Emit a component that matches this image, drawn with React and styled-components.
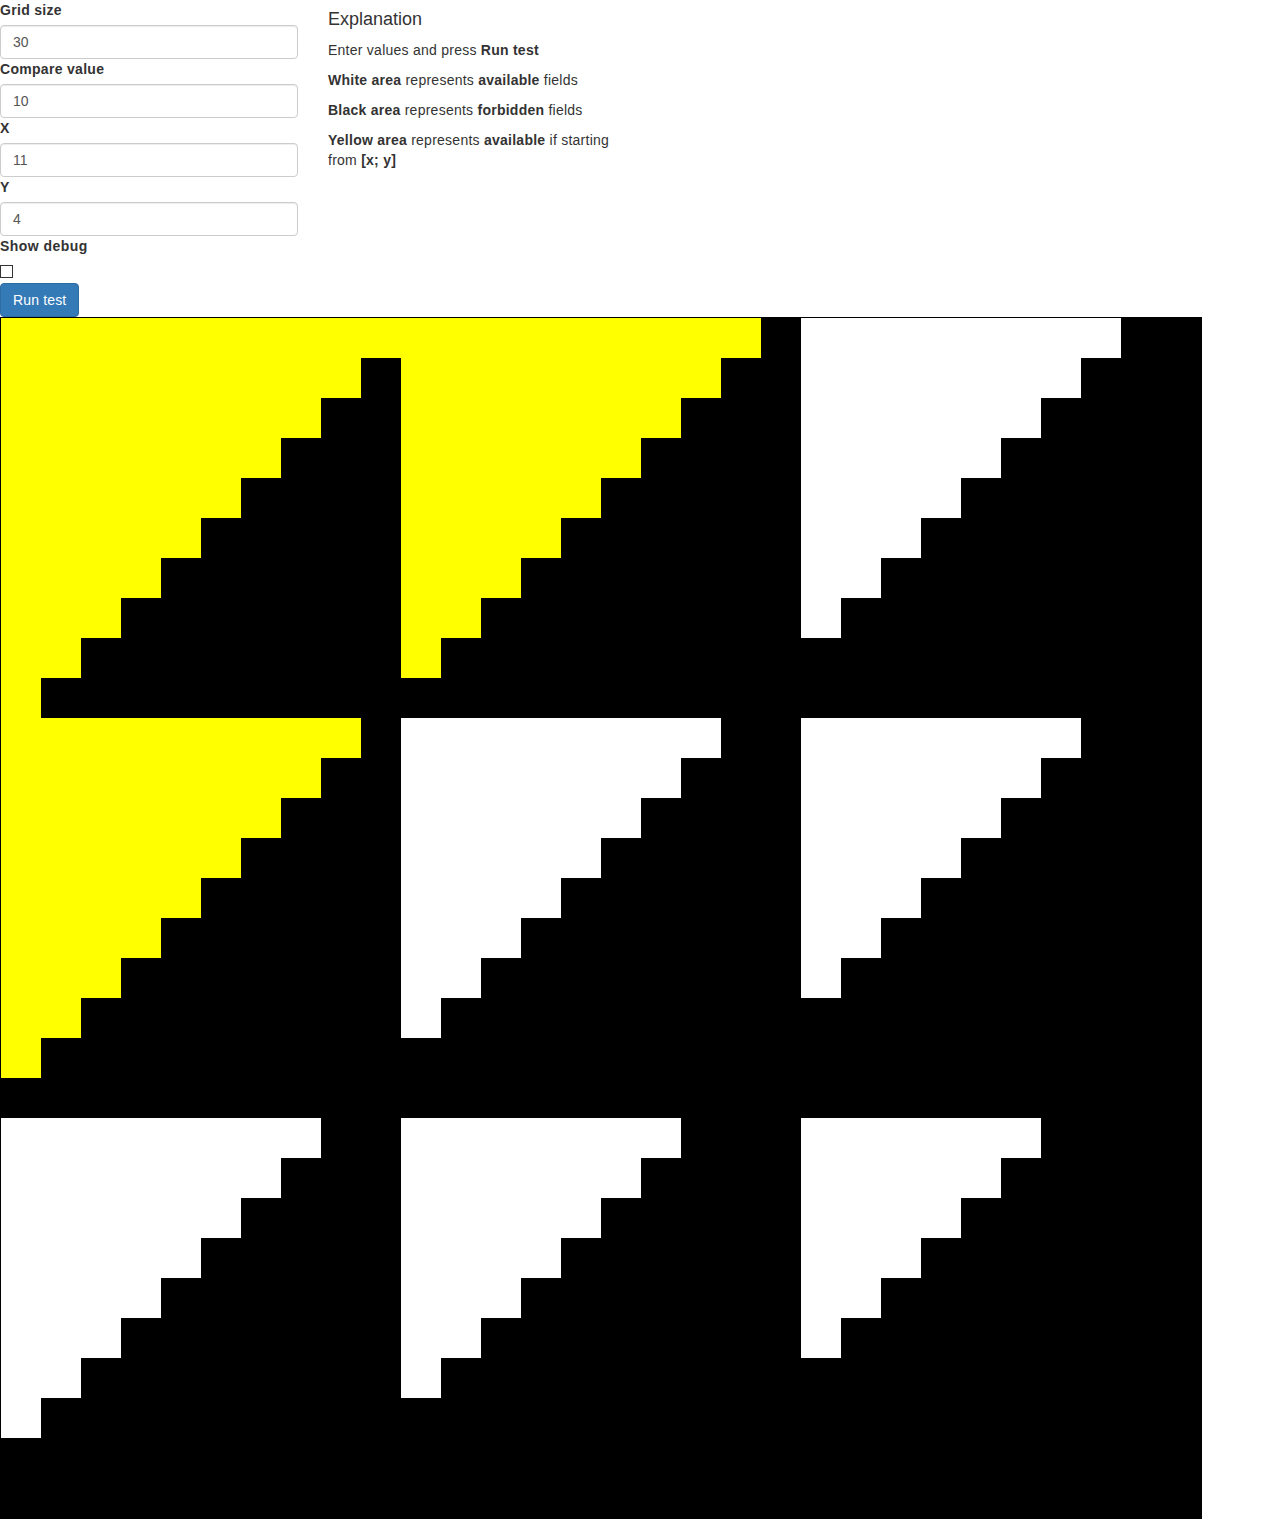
import React, { useMemo } from "react";
import styled, { createGlobalStyle } from "styled-components";

const GlobalStyle = createGlobalStyle`
  html, body { margin: 0; padding: 0; background: #fff; }
  body {
    font-family: "Liberation Sans", Arial, Helvetica, sans-serif;
    font-size: 14px;
    line-height: 20px;
    color: #333;
  }
  * { box-sizing: border-box; }
`;

const Page = styled.div`
  display: flex;
  flex-direction: column;
  align-items: flex-start;
`;

const TopRow = styled.div`
  display: flex;
  align-items: flex-start;
  gap: 30px;
`;

const FormColumn = styled.form`
  width: 298px;
  display: flex;
  flex-direction: column;
  align-items: flex-start;
`;

const Label = styled.label`
  display: block;
  font-weight: bold;
  font-size: 14px;
  line-height: 20px;
  margin-bottom: 5px;
  letter-spacing: ${(p) => (p.$wide ? "0.45px" : "0.3px")};
`;

const Input = styled.input`
  display: block;
  width: 298px;
  height: 34px;
  padding: 6px 12px;
  font-family: inherit;
  font-size: 14px;
  line-height: 20px;
  color: #555;
  background: #fff;
  border: 1px solid #ccc;
  border-radius: 4px;
  box-shadow: inset 0 1px 1px rgba(0, 0, 0, 0.075);
  outline: none;
`;

const Checkbox = styled.input`
  appearance: none;
  -webkit-appearance: none;
  display: block;
  width: 13px;
  height: 13px;
  margin: 4px 0 5px 0;
  border: 1px solid #333;
  border-radius: 0;
  background: #fff;
`;

const Button = styled.button`
  display: inline-block;
  height: 34px;
  padding: 6px 12px;
  font-family: inherit;
  font-size: 14px;
  line-height: 20px;
  letter-spacing: 0.15px;
  color: #fff;
  background: #337ab7;
  border: 1px solid #2e6da4;
  border-radius: 4px;
  cursor: pointer;
`;

const ExplainColumn = styled.div`
  width: 300px;
`;

const Heading = styled.h4`
  font-size: 18px;
  font-weight: 500;
  line-height: 1.1;
  margin: 10px 0 10px 0;
  color: #333;
`;

const Para = styled.p`
  margin: 0 0 10px 0;
  line-height: 20px;
  letter-spacing: 0.25px;
`;

const Board = styled.div`
  display: grid;
  grid-template-columns: repeat(${(p) => p.$size}, 40px);
  grid-auto-rows: 40px;
  border: 1px solid #000;
`;

const toneColor = { white: "#ffffff", black: "#000000", yellow: "#ffff00" };

const Cell = styled.div`
  background: ${(p) => toneColor[p.$tone]};
`;

const digitSum = (n) =>
  String(n)
    .split("")
    .reduce((a, d) => a + Number(d), 0);

function computeGrid(size, limit, sx, sy) {
  const ok = (x, y) => digitSum(x) + digitSum(y) < limit;
  const reach = Array.from({ length: size }, () => Array(size).fill(false));
  if (ok(sx, sy)) {
    const q = [[sx, sy]];
    reach[sy][sx] = true;
    while (q.length) {
      const [x, y] = q.shift();
      [
        [1, 0],
        [-1, 0],
        [0, 1],
        [0, -1],
      ].forEach(([dx, dy]) => {
        const nx = x + dx;
        const ny = y + dy;
        if (nx >= 0 && ny >= 0 && nx < size && ny < size && !reach[ny][nx] && ok(nx, ny)) {
          reach[ny][nx] = true;
          q.push([nx, ny]);
        }
      });
    }
  }
  const cells = [];
  for (let y = 0; y < size; y++) {
    for (let x = 0; x < size; x++) {
      cells.push(reach[y][x] ? "yellow" : ok(x, y) ? "white" : "black");
    }
  }
  return cells;
}

export default function App() {
  const size = 30;
  const cells = useMemo(() => computeGrid(size, 10, 11, 4), []);
  return (
    <Page>
      <GlobalStyle />
      <TopRow>
        <FormColumn onSubmit={(e) => e.preventDefault()}>
          <Label>Grid size</Label>
          <Input defaultValue="30" />
          <Label>Compare value</Label>
          <Input defaultValue="10" />
          <Label>X</Label>
          <Input defaultValue="11" />
          <Label>Y</Label>
          <Input defaultValue="4" />
          <Label $wide>Show debug</Label>
          <Checkbox type="checkbox" />
          <Button type="button">Run test</Button>
        </FormColumn>
        <ExplainColumn>
          <Heading>Explanation</Heading>
          <Para>
            Enter values and press <b>Run test</b>
          </Para>
          <Para>
            <b>White area</b> represents <b>available</b> fields
          </Para>
          <Para>
            <b>Black area</b> represents <b>forbidden</b> fields
          </Para>
          <Para>
            <b>Yellow area</b> represents <b>available</b> if starting from <b>[x; y]</b>
          </Para>
        </ExplainColumn>
      </TopRow>
      <Board $size={size}>
        {cells.map((t, i) => (
          <Cell key={i} $tone={t} />
        ))}
      </Board>
    </Page>
  );
}
